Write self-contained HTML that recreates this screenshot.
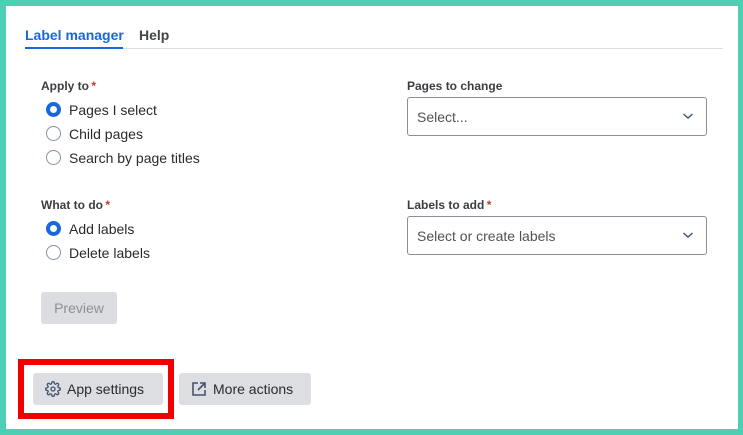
<!DOCTYPE html>
<html><head><meta charset="utf-8"><style>
*{box-sizing:border-box;margin:0;padding:0}
body{width:743px;height:435px;background:#4ecfb3;font-family:"Liberation Sans",sans-serif;color:#172b4d;position:relative;overflow:hidden}
.panel{position:absolute;left:6px;top:6px;width:732px;height:423px;background:#fff}
.a{position:absolute;white-space:nowrap}
.lbl{font-size:12px;font-weight:bold;color:#3b3d42}
.req{color:#c9372c;margin-left:-1px}
.opt{font-size:14px;color:#292a2e}
.radio{position:absolute;width:15px;height:15px;border-radius:50%;border:1px solid #8590a2;background:#fff}
.radio.on{border:4.5px solid #1868db}
.sel{position:absolute;left:407px;width:300px;height:39px;border:1px solid #8c8f97;border-radius:3px;font-size:14px;color:#505258;padding:11px 9px}
.sel svg{position:absolute;right:12px;top:14px}
.btn{position:absolute;height:32px;background:#dddee1;border-radius:3px;font-size:14px;color:#292a2e;line-height:32px}
</style></head><body>
<div class="panel"></div>
<div class="a" style="left:25px;top:27px;font-size:14px;font-weight:bold;color:#1868db">Label manager</div>
<div class="a" style="left:139px;top:27px;font-size:14px;font-weight:bold;color:#44464c">Help</div>
<div class="a" style="left:25px;top:48px;width:698px;height:1px;background:#dcdfe4"></div>
<div class="a" style="left:25px;top:47px;width:98px;height:2px;background:#1868db"></div>

<div class="a lbl" style="left:41px;top:79px">Apply to <span class="req">*</span></div>
<div class="radio on" style="left:46px;top:102px"></div><div class="a opt" style="left:69px;top:102px">Pages I select</div>
<div class="radio" style="left:46px;top:126px"></div><div class="a opt" style="left:69px;top:126px">Child pages</div>
<div class="radio" style="left:46px;top:150px"></div><div class="a opt" style="left:69px;top:150px">Search by page titles</div>

<div class="a lbl" style="left:41px;top:198px">What to do <span class="req">*</span></div>
<div class="radio on" style="left:46px;top:221px"></div><div class="a opt" style="left:69px;top:221px">Add labels</div>
<div class="radio" style="left:46px;top:245px"></div><div class="a opt" style="left:69px;top:245px">Delete labels</div>

<div class="a lbl" style="left:407px;top:79px">Pages to change</div>
<div class="sel" style="top:97px">Select...<svg width="12" height="8" viewBox="0 0 12 8"><path d="M1.5 2l4.5 4 4.5-4" fill="none" stroke="#44546f" stroke-width="1.5"/></svg></div>
<div class="a lbl" style="left:407px;top:198px">Labels to add <span class="req">*</span></div>
<div class="sel" style="top:216px">Select or create labels<svg width="12" height="8" viewBox="0 0 12 8"><path d="M1.5 2l4.5 4 4.5-4" fill="none" stroke="#44546f" stroke-width="1.5"/></svg></div>

<div class="btn" style="left:41px;top:292px;width:76px;text-align:center;color:#8c8f97;background:#dcdde0">Preview</div>

<div class="a" style="left:18px;top:359px;width:156px;height:60px;border:6px solid #f20000"></div>
<div class="btn" style="left:33px;top:373px;width:130px;padding-left:34px">App settings</div>
<svg class="a" style="left:45px;top:381px" width="16" height="16" viewBox="0 0 24 24" fill="none" stroke="#44546f" stroke-width="2"><circle cx="12" cy="12" r="3"/><path d="M19.4 15a1.7 1.7 0 0 0 .3 1.8l.1.1a2 2 0 1 1-2.8 2.8l-.1-.1a1.7 1.7 0 0 0-1.8-.3 1.7 1.7 0 0 0-1 1.5V21a2 2 0 1 1-4 0v-.1a1.7 1.7 0 0 0-1.1-1.5 1.7 1.7 0 0 0-1.8.3l-.1.1a2 2 0 1 1-2.8-2.8l.1-.1a1.7 1.7 0 0 0 .3-1.8 1.7 1.7 0 0 0-1.5-1H3a2 2 0 1 1 0-4h.1a1.7 1.7 0 0 0 1.5-1.1 1.7 1.7 0 0 0-.3-1.8l-.1-.1a2 2 0 1 1 2.8-2.8l.1.1a1.7 1.7 0 0 0 1.8.3H9a1.7 1.7 0 0 0 1-1.5V3a2 2 0 1 1 4 0v.1a1.7 1.7 0 0 0 1 1.5 1.7 1.7 0 0 0 1.8-.3l.1-.1a2 2 0 1 1 2.8 2.8l-.1.1a1.7 1.7 0 0 0-.3 1.8V9a1.7 1.7 0 0 0 1.5 1H21a2 2 0 1 1 0 4h-.1a1.7 1.7 0 0 0-1.5 1z"/></svg>
<div class="btn" style="left:179px;top:373px;width:132px;padding-left:34px">More actions</div>
<svg class="a" style="left:191px;top:381px" width="16" height="16" viewBox="0 0 16 16" fill="none" stroke="#44546f" stroke-width="1.6"><path d="M7 2H2v12h12V9M9 2h5v5M14 2L7 9"/></svg>
</body></html>
